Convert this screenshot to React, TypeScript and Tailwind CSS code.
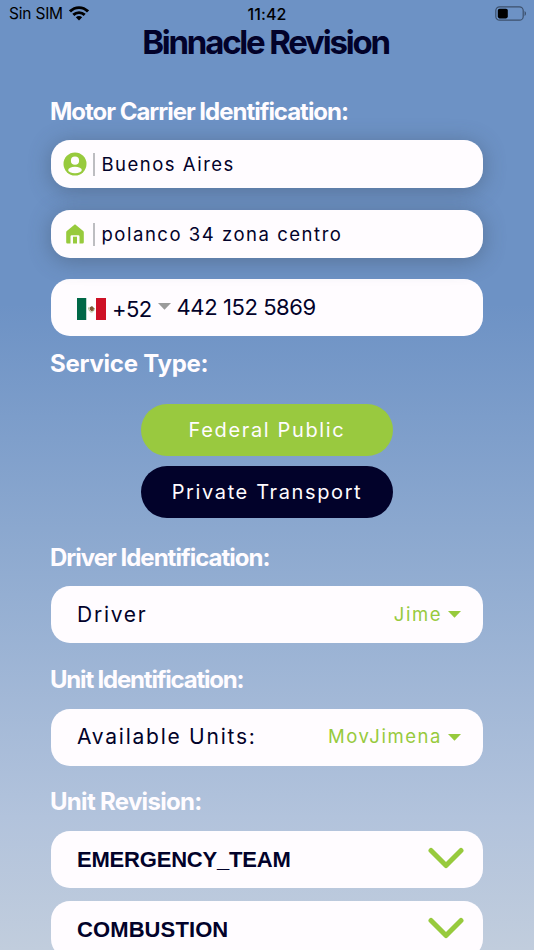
import React from 'react';
import type { ReactNode } from 'react';

const revisions = [
  { name: 'EMERGENCY_TEAM', tracking: 'tracking-[-0.2px]' },
  { name: 'COMBUSTION', tracking: 'tracking-[0.1px]' },
];

function StatusBar() {
  return (
    <div className="grid h-[27px] grid-cols-3 items-center pl-[9px] pr-[7px] pt-px text-[16px] leading-[20px] text-black">
      <div className="flex items-center gap-[6px]">
        <span className="text-[15.5px] tracking-[-0.2px]">Sin SIM</span>
        <svg width="20" height="15" viewBox="0 0 20 15" className="-mt-[2px]">
          <g fill="none" stroke="#000" strokeWidth="2.9">
            <path d="M1 5.4C6.2.3 13.8.3 19 5.4" />
            <path d="M4.3 8.9c3.3-3.1 8.1-3.1 11.4 0" />
          </g>
          <path d="M6.8 11.3c1.9-1.6 4.5-1.6 6.4 0L10 14.6z" />
        </svg>
      </div>
      <span className="-ml-[2px] text-center font-medium tracking-[0.1px]">11:42</span>
      <svg width="32" height="15" viewBox="0 0 32 15" className="-mt-[2px] justify-self-end">
        <rect x="0.8" y="0.8" width="27.4" height="13.4" rx="3.8" fill="none" stroke="#000" strokeOpacity="0.45" strokeWidth="1.2" />
        <rect x="2.8" y="2.8" width="10" height="9.6" rx="1.8" />
        <path d="M29.6 5v5c1.7-.8 1.7-4.2 0-5z" fillOpacity="0.5" />
      </svg>
    </div>
  );
}

function Heading({ className, children }: { className: string; children: ReactNode }) {
  return <h2 className={`-ml-px whitespace-nowrap text-[24px] font-bold leading-[28px] text-[#fffcff] ${className}`}>{children}</h2>;
}

function Field({ icon, value, className }: { icon: ReactNode; value: string; className: string }) {
  return (
    <div className="flex h-[48px] items-center rounded-[19px] bg-[#fffcff] pl-[12px] shadow-[0_3px_22px_rgba(60,75,95,0.45)]">
      <div className="flex w-6 justify-center">{icon}</div>
      <div className="ml-[6px] mr-[7px] h-[23px] w-[1.5px] bg-[#bdbdc1]" />
      <span className={`whitespace-nowrap pt-px text-[18.5px] ${className}`}>{value}</span>
    </div>
  );
}

function Caret({ className }: { className: string }) {
  return (
    <svg width="13" height="7" viewBox="0 0 13 7" fill="currentColor" className={className}>
      <path d="M0 0h13L6.5 6.8z" />
    </svg>
  );
}

function SelectCard({ label, value }: { label: string; value: string }) {
  return (
    <div className="flex h-[57px] items-center justify-between rounded-[19px] bg-[#fffcff] pl-[26px] pr-[22px]">
      <span className="text-[21px] tracking-[1.75px]">{label}</span>
      <div className="flex items-center text-[#97ca3d]">
        <span className="text-[18.5px] tracking-[1.55px]">{value}</span>
        <Caret className="ml-[6px]" />
      </div>
    </div>
  );
}

export default function App() {
  return (
    <div className="h-[950px] w-[534px] overflow-hidden bg-[linear-gradient(180deg,#6d92c5_0%,#6d92c5_32%,#8eaad0_58%,#b2c3dc_86%,#c1cddd_100%)] font-['Inter','Liberation_Sans',sans-serif] text-[#02022a]">
      <StatusBar />
      <h1 className="whitespace-nowrap pr-[3px] text-center text-[33px] font-bold leading-[30px] tracking-[-2.2px]">Binnacle Revision</h1>

      <main className="ml-[51px] w-[432px]">
        <Heading className="mt-[41px] tracking-[-1.02px]">Motor Carrier Identification:</Heading>
        <div className="mt-[14px] flex flex-col gap-[22px]">
          <Field
            value="Buenos Aires"
            className="tracking-[1.5px]"
            icon={
              <svg width="24" height="24" viewBox="0 0 24 24">
                <circle cx="12" cy="12" r="11.5" fill="#97ca3d" />
                <circle cx="12" cy="8.7" r="4.1" fill="#fffcff" />
                <ellipse cx="12" cy="18" rx="6.8" ry="3.2" fill="#fffcff" />
              </svg>
            }
          />
          <Field
            value="polanco 34 zona centro"
            className="tracking-[1.53px]"
            icon={
              <svg width="18" height="20" viewBox="0 0 18 20" fill="#97ca3d">
                <path d="M9 .3 17.2 7q.6.5.6 1.4v9.9q0 1.2-1.2 1.2h-3.1v-7.1q0-1.2-1.2-1.2H5.7q-1.2 0-1.2 1.2v7.1H1.4q-1.2 0-1.2-1.2V8.4Q.2 7.5.8 7z" />
                <path d="M7 12.7h4v6.8H7z" />
              </svg>
            }
          />
        </div>

        <div className="mt-[21px] flex h-[57px] items-center rounded-[19px] bg-[#fffcff] pl-[26px]">
          <svg width="29" height="22" viewBox="0 0 29 22" className="mt-[3px]">
            <path fill="#006847" d="M0 0h9.5v22H0z" />
            <path fill="#fff" d="M9.5 0H19v22H9.5z" />
            <path fill="#ce1126" d="M19 0h10v22H19z" />
            <path d="M11.5 9.5c.2 3 1.5 4.5 3 4.5s2.8-1.5 3-4" fill="none" stroke="#a9bd8b" />
            <path d="M12.5 9.5 15 8l2 2-.5 2.5-2 .8-1.7-1.5z" fill="#7d5a35" />
          </svg>
          <span className="ml-[6px] mt-[3px] text-[22px] tracking-[-0.6px]">+52</span>
          <Caret className="ml-[6px] -mt-[3px] text-[#9b9b9b]" />
          <span className="ml-[6px] text-[22px] tracking-[-0.42px]">442 152 5869</span>
        </div>

        <Heading className="mt-[14px] tracking-[-0.25px]">Service Type:</Heading>
        <div className="mt-[26px] flex flex-col items-center gap-[10px] text-[20px] text-[#fffcff]">
          <button className="h-[52px] w-[252px] rounded-full bg-[#99c93f] tracking-[1.65px]">Federal Public</button>
          <button className="h-[52px] w-[252px] rounded-full bg-[#02022a] tracking-[1.62px]">Private Transport</button>
        </div>

        <Heading className="mt-[26px] tracking-[-1px]">Driver Identification:</Heading>
        <div className="mt-[14.4px]">
          <SelectCard label="Driver" value="Jime" />
        </div>

        <Heading className="mt-[22.6px] tracking-[-1.2px]">Unit Identification:</Heading>
        <div className="mt-[14.6px]">
          <SelectCard label="Available Units:" value="MovJimena" />
        </div>

        <Heading className="mt-[22.9px] tracking-[-0.7px]">Unit Revision:</Heading>
        <div className="mt-[14.5px] flex flex-col gap-[13px]">
          {revisions.map((r) => (
            <div key={r.name} className="flex h-[57px] shrink-0 items-center justify-between rounded-[19px] bg-[#fffcff] pl-[26px] pr-[19px]">
              <span className={`font-['Liberation_Sans',sans-serif] text-[22px] font-bold ${r.tracking}`}>{r.name}</span>
              <svg width="36" height="22" viewBox="0 0 36 22" fill="none" stroke="#97ca3d" strokeWidth="5" strokeLinecap="round" strokeLinejoin="round" className="-mt-[2px]">
                <path d="M3 3.5 18 18.5 33 3.5" />
              </svg>
            </div>
          ))}
        </div>
      </main>
    </div>
  );
}
